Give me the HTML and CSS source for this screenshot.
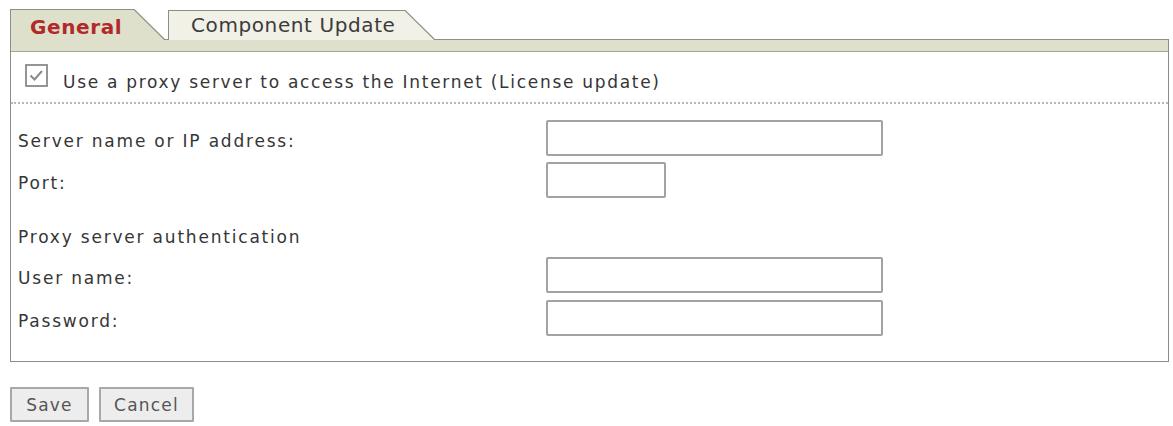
FILE: index.html
```html
<!DOCTYPE html>
<html lang="en">
<head>
<meta charset="utf-8">
<title>Proxy settings</title>
<link rel="stylesheet" href="styles.css">
</head>
<body>
<div class="page">
  <div class="tabs">
    <div class="tab tab-active">
      <span class="tab-label">General</span>
      <svg class="tab-slant" width="32" height="31" viewBox="0 0 32 31"><polygon points="0,0 0.5,0 31.5,31 0,31" fill="#dfe0cc"/><line x1="0" y1="0.5" x2="31" y2="31" stroke="#8e8e84" stroke-width="1.2"/></svg>
    </div>
    <div class="tab tab-inactive">
      <span class="tab-label">Component Update</span>
      <svg class="tab-slant" width="31" height="30" viewBox="0 0 31 30"><polygon points="0,0 0.5,0 30.5,30 0,30" fill="#f1f1e8"/><line x1="0" y1="0.5" x2="30" y2="30" stroke="#8e8e84" stroke-width="1.2"/></svg>
    </div>
  </div>
  <div class="panel">
    <div class="bar"></div>
    <div class="check-row">
      <svg class="checkbox" width="23" height="23" viewBox="0 0 23 23"><rect x="1" y="1" width="21" height="21" fill="#fff" stroke="#8a8a8a" stroke-width="1.8"/><polyline points="5.5,11.5 9.5,15.5 17,7" fill="none" stroke="#888888" stroke-width="1.9"/></svg>
      <span class="check-text">Use a proxy server to access the Internet (License update)</span>
    </div>
    <div class="form">
      <div class="row">
        <span class="label">Server name or IP address:</span>
        <span class="input input-wide"></span>
      </div>
      <div class="row">
        <span class="label">Port:</span>
        <span class="input input-port"></span>
      </div>
      <div class="row row-section">
        <span class="label">Proxy server authentication</span>
      </div>
      <div class="row">
        <span class="label">User name:</span>
        <span class="input input-wide"></span>
      </div>
      <div class="row row-last">
        <span class="label">Password:</span>
        <span class="input input-wide"></span>
      </div>
    </div>
  </div>
  <div class="buttons">
    <button class="btn btn-save">Save</button>
    <button class="btn btn-cancel">Cancel</button>
  </div>
</div>
</body>
</html>
```
FILE: styles.css
```css
* { box-sizing: border-box; }
html, body { margin: 0; padding: 0; background: #ffffff; }
body {
  font-family: "DejaVu Sans", "Liberation Sans", sans-serif;
  color: #363636;
}
.page {
  padding: 9px 4px 0 10px;
}
.tabs {
  display: flex;
  align-items: flex-start;
  height: 31px;
  background: linear-gradient(#8e8e84, #8e8e84) left bottom / 100% 1px no-repeat;
}
.tab {
  display: flex;
  align-items: flex-start;
}
.tab-label {
  display: block;
  border-left: 1px solid #8e8e84;
  border-top: 1px solid #8e8e84;
  font-size: 20px;
  line-height: 23px;
  letter-spacing: 0.6px;
  white-space: nowrap;
}
.tab-active .tab-label {
  width: 124px;
  height: 31px;
  padding: 6px 0 0 19px;
  background: #dfe0cc;
  color: #b02a2a;
  font-weight: bold;
}
.tab-inactive {
  margin-left: 2px;
  margin-top: 1px;
}
.tab-inactive .tab-label {
  width: 237px;
  height: 30px;
  padding: 3px 0 0 22px;
  background: #f1f1e8;
  color: #3b3b3b;
}
.tab-slant { display: block; }
.panel {
  width: 1159px;
  border: 1px solid #8c8c8c;
  border-top: none;
}
.bar {
  height: 12px;
  background: #dfe0cc;
  border-bottom: 1px solid #a6a698;
}
.check-row {
  display: flex;
  align-items: center;
  height: 52px;
  padding: 10px 0 0 14px;
  gap: 15px;
  border-bottom: 2px dotted #b8b8b8;
}
.checkbox {
  display: block;
  margin-bottom: 13px;
}
.check-text {
  font-size: 17px;
  letter-spacing: 1.7px;
  color: #363636;
}
.form {
  padding: 16px 0 25px 7px;
  display: flex;
  flex-direction: column;
  gap: 6px;
}
.row {
  display: flex;
  align-items: center;
  height: 36px;
}
.row-section {
  height: 33px;
  margin-top: 14px;
}
.row-last { margin-top: 1px; }
.label {
  width: 528px;
  padding-top: 5px;
  font-size: 17px;
  letter-spacing: 1.8px;
  color: #363636;
  white-space: nowrap;
}
.input {
  display: block;
  height: 36px;
  border: 2px solid #a2a2a2;
  border-radius: 2px;
  background: #fff;
}
.input-wide { width: 337px; }
.input-port { width: 120px; }
.buttons {
  display: flex;
  gap: 10px;
  margin-top: 25px;
}
.btn {
  height: 35px;
  border: 2px solid #a8a8a8;
  border-radius: 1px;
  background: #ededed;
  color: #555;
  font-family: "DejaVu Sans", "Liberation Sans", sans-serif;
  font-size: 17px;
  letter-spacing: 1.2px;
  padding: 0;
}
.btn-save { width: 79px; }
.btn-cancel { width: 95px; }
```
